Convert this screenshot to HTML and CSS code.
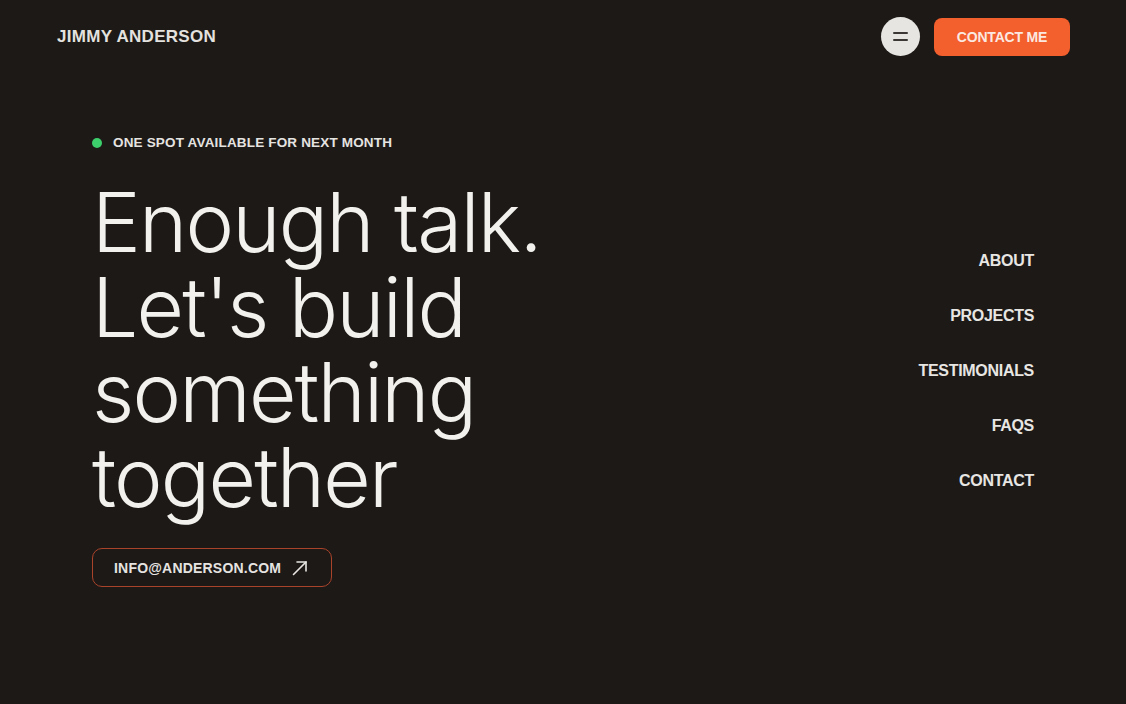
FILE: index.html
```html
<!DOCTYPE html>
<html lang="en">
<head>
<meta charset="utf-8">
<title>Jimmy Anderson</title>
<link rel="stylesheet" href="styles.css">
</head>
<body>
<header class="topbar">
  <div class="brand">JIMMY ANDERSON</div>
  <div class="actions">
    <button class="menu-btn" aria-label="Menu"><span></span><span></span></button>
    <a class="cta" href="#">CONTACT ME</a>
  </div>
</header>
<main class="hero">
  <section class="hero-left">
    <div class="status"><span class="dot"></span>ONE SPOT AVAILABLE FOR NEXT MONTH</div>
    <h1 class="headline">Enough talk.<br>Let's build<br>something<br>together</h1>
    <a class="email" href="#">INFO@ANDERSON.COM
      <svg width="18" height="18" viewBox="0 0 18 18" fill="none" stroke="#e8e6e3" stroke-width="1.6" stroke-linecap="round"><path d="M2.5 15.5 L15 3"/><path d="M6 3 H15 V12"/></svg>
    </a>
  </section>
  <nav class="side-nav">
    <a href="#">ABOUT</a>
    <a href="#">PROJECTS</a>
    <a href="#">TESTIMONIALS</a>
    <a href="#">FAQS</a>
    <a href="#">CONTACT</a>
  </nav>
</main>
</body>
</html>
```
FILE: styles.css
```css
* { box-sizing: border-box; }
html, body { margin: 0; padding: 0; }
body {
  background: #1c1917;
  color: #ecebe8;
  font-family: "Liberation Sans", Arial, sans-serif;
  width: 1126px;
  height: 704px;
  overflow: hidden;
}
a { color: inherit; text-decoration: none; }
.topbar {
  display: flex;
  justify-content: space-between;
  align-items: flex-start;
  padding: 17px 56px 0 57px;
  height: 73px;
}
.brand {
  font-size: 17px;
  font-weight: 700;
  letter-spacing: 0.3px;
  margin-top: 10px;
  color: #e4e2df;
}
.actions { display: flex; align-items: center; gap: 14px; }
.menu-btn {
  width: 39px; height: 39px;
  border-radius: 50%;
  border: none;
  background: #e6e5e2;
  display: flex; flex-direction: column; justify-content: center; align-items: center;
  gap: 5px;
  padding: 0;
}
.menu-btn span { display: block; width: 15px; height: 2px; background: #3a3735; border-radius: 1px; }
.cta {
  background: #f35f2d;
  color: #fbe9e1;
  font-size: 14px;
  font-weight: 700;
  letter-spacing: -0.2px;
  height: 38px;
  width: 136px;
  border-radius: 8px;
  display: flex; align-items: center; justify-content: center;
}
.hero {
  display: flex;
  justify-content: space-between;
  padding: 0 92px 0 92px;
}
.hero-left { padding-top: 62px; }
.status {
  display: flex; align-items: center;
  font-size: 13.5px; font-weight: 700; letter-spacing: 0.17px;
  color: #e6e4e1;
}
.dot { width: 10px; height: 10px; border-radius: 50%; background: #3ccf6b; margin: 0 11px 0 0; }
.headline {
  font-family: Inter, "Liberation Sans", sans-serif;
  font-weight: 300;
  font-size: 82px;
  line-height: 85px;
  letter-spacing: -1.8px;
  margin: 30px 0 28px 0;
  color: #f2f1ee;
}
.email {
  display: inline-flex; align-items: center; gap: 10px;
  border: 1.5px solid #a9432a;
  border-radius: 10px;
  height: 39px;
  padding: 0 22px 0 21px;
  font-size: 14px; font-weight: 700; letter-spacing: 0.2px;
  color: #e6e4e1;
}
.side-nav {
  display: flex; flex-direction: column; align-items: flex-end;
  gap: 37px;
  padding-top: 179px;
}
.side-nav a { font-size: 16px; font-weight: 700; letter-spacing: -0.3px; line-height: 18px; color: #e8e6e3; }
```
